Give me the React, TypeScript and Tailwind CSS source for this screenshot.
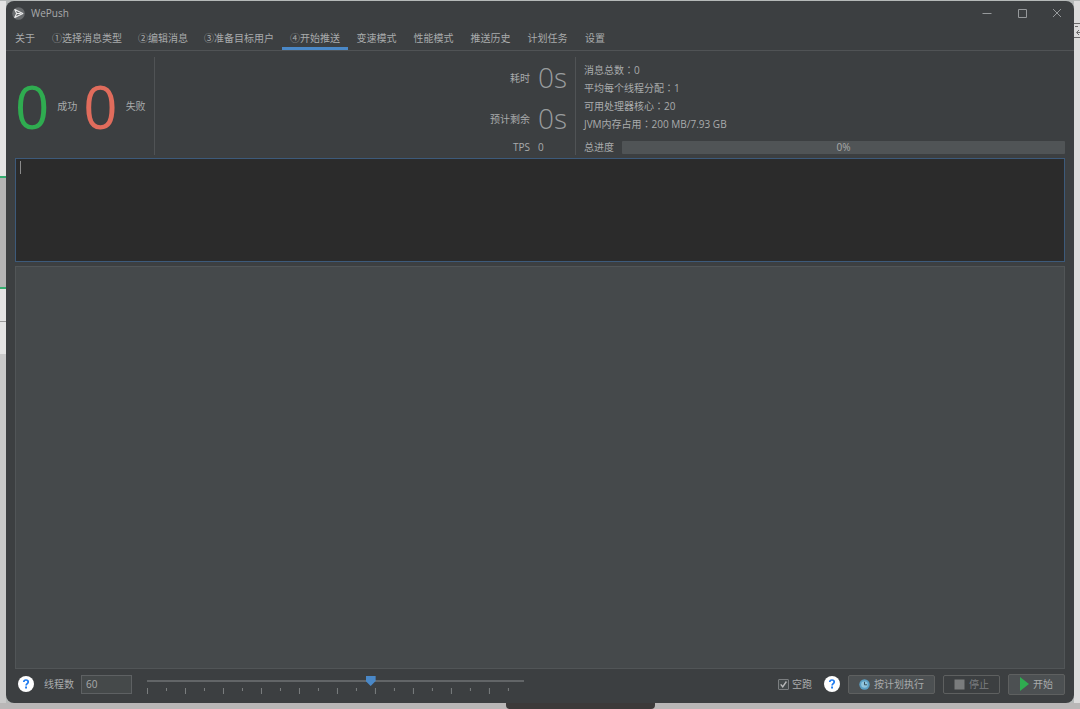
import { useState } from "react";
import type { ReactNode } from "react";

const tabs = [
  { label: "关于", width: "w-[38px]" },
  { label: "①选择消息类型", width: "w-[86px]" },
  { label: "②编辑消息", width: "w-[66px]" },
  { label: "③准备目标用户", width: "w-[86px]" },
  { label: "④开始推送", width: "w-[66px]" },
  { label: "变速模式", width: "w-[57px]" },
  { label: "性能模式", width: "w-[57px]" },
  { label: "推送历史", width: "w-[57px]" },
  { label: "计划任务", width: "w-[57px]" },
  { label: "设置", width: "w-[38px]" },
];

const stats = [
  { label: "消息总数", value: "0" },
  { label: "平均每个线程分配", value: "1" },
  { label: "可用处理器核心", value: "20" },
  { label: "JVM内存占用", value: "200 MB/7.93 GB" },
];

function Logo() {
  return (
    <svg width="13" height="13" viewBox="0 0 13 13" aria-hidden="true">
      <circle cx="6.5" cy="6.5" r="6.3" fill="#686b6d" />
      <path d="M2.8 2.5 10.8 6.5 2.8 10.5 4.6 6.5Z M4.8 6.5H8.6" fill="none" stroke="#eeeeee" strokeWidth="1.1" strokeLinejoin="round" />
    </svg>
  );
}

function TitleBar() {
  return (
    <header className="flex h-6 shrink-0 items-center pl-1.5 pr-3">
      <Logo />
      <h1 className="ml-1.5 text-[10px]">WePush</h1>
      <div className="ml-auto flex gap-[25px] pb-px text-[#96999b]">
        <button aria-label="最小化">
          <svg width="10" height="10" viewBox="0 0 10 10" stroke="currentColor"><path d="M.5 5.5h9" /></svg>
        </button>
        <button aria-label="最大化">
          <svg width="10" height="10" viewBox="0 0 10 10" fill="none" stroke="currentColor"><path d="M1.5 1.5h8v8h-8z" /></svg>
        </button>
        <button aria-label="关闭">
          <svg width="10" height="10" viewBox="0 0 10 10" stroke="currentColor"><path d="m1 1 8 8M9 1 1 9" /></svg>
        </button>
      </div>
    </header>
  );
}

function HelpButton() {
  return (
    <button aria-label="帮助" className="size-4 shrink-0 rounded-full bg-white">
      <svg width="16" height="16" viewBox="0 0 16 16" fill="none" aria-hidden="true">
        <path d="M5.8 6.1c0-1.4.9-2.1 2.2-2.1s2.2.8 2.2 2c0 1.6-2.1 1.7-2.1 3.5" stroke="#1f7bf0" strokeWidth="1.7" />
        <path d="M7.1 10.6h1.9v1.9H7.1z" fill="#1f7bf0" />
      </svg>
    </button>
  );
}

function BigCount({ value, label, color }: { value: string; label: string; color: string }) {
  return (
    <div className="flex items-center gap-2">
      <span className={`text-[60px] leading-[80px] ${color}`}>{value}</span>
      <span>{label}</span>
    </div>
  );
}

function Time({ label }: { label: string }) {
  return (
    <div className="contents">
      <span className="text-right">{label}</span>
      <span className="text-[28px] font-light leading-[41px] text-[#999c9e]">0s</span>
    </div>
  );
}

function ActionButton({ children, disabled = false, primary = false }: { children: ReactNode; disabled?: boolean; primary?: boolean }) {
  return (
    <button
      disabled={disabled}
      className={`flex items-center gap-1 rounded-[2px] border border-[#5e6060] bg-[#4c5052] disabled:bg-transparent disabled:text-[#7b7e80] ${primary ? "h-[21px] px-[11px]" : "h-[19px] px-[10px]"}`}
    >
      {children}
    </button>
  );
}

export default function App() {
  const [active, setActive] = useState(4);
  const [threads, setThreads] = useState(60);
  return (
    <div className="flex min-h-screen flex-col bg-[#b5b9b8] pt-px font-['Open_Sans','Noto_Sans_CJK_SC',sans-serif] text-[10px] leading-[18px] text-[#a9abac]">
      <div className="flex grow">
        <div className="flex w-1.5 shrink-0 flex-col bg-[#e4e4e4]">
          <div className="h-[175px]" />
          <div className="h-0.5 bg-[#35ae70]" />
          <div className="h-[109px] bg-[#b5b5b5]" />
          <div className="h-0.5 bg-[#35ae70]" />
          <div className="h-8" />
          <div className="h-px bg-[#9a9a9a]" />
          <div className="h-8" />
          <div className="grow bg-[#c9c9c9]" />
        </div>

        <div className="flex min-w-0 grow flex-col rounded-lg bg-[#3c3f41]">
          <TitleBar />
          <nav className="flex h-[26px] shrink-0 border-b border-[#505355]">
            {tabs.map((tab, i) => (
              <button
                key={tab.label}
                onClick={() => setActive(i)}
                aria-current={active === i ? "page" : undefined}
                className={`shrink-0 whitespace-nowrap border-b-[3px] pt-[3px] ${tab.width} ${active === i ? "border-[#4a88c7]" : "border-transparent"}`}
              >
                {tab.label}
              </button>
            ))}
          </nav>

          <main className="flex grow flex-col px-[9px]">
            <section className="flex pb-[3px] pt-1.5">
              <div className="flex items-center gap-1.5 border-r border-[#505355] pr-2">
                <BigCount value="0" label="成功" color="text-[#2fac50]" />
                <BigCount value="0" label="失败" color="text-[#e06c5c]" />
              </div>
              <div className="flex flex-6 justify-end pr-2">
                <div className="grid grid-cols-[auto_auto] items-center gap-x-2">
                  <Time label="耗时" />
                  <Time label="预计剩余" />
                  <span className="text-right leading-4">TPS</span>
                  <span className="leading-4">0</span>
                </div>
              </div>
              <div className="flex flex-7 flex-col border-l border-[#505355] pl-2 pt-1">
                {stats.map((stat) => (
                  <p key={stat.label}>
                    {stat.label}
                    <span className="font-['Noto_Sans_CJK_JP',sans-serif]">：</span>
                    {stat.value}
                  </p>
                ))}
                <div className="mt-auto flex items-center gap-2 leading-4">
                  <span>总进度</span>
                  <div role="progressbar" aria-label="总进度" aria-valuenow={0} className="h-[13px] grow rounded-[1px] bg-[#505456] text-center leading-[13px]">
                    0%
                  </div>
                </div>
              </div>
            </section>

            <div className="relative flex h-[104px] shrink-0">
              <textarea
                aria-label="日志"
                className="grow resize-none border border-[#3d5a7a] bg-[#2b2b2b] px-1 py-px caret-transparent outline-none"
              />
              <span className="absolute left-[5px] top-[3px] h-[13px] w-px bg-[#8a8a8a]" />
            </div>
            <div className="mt-1 grow border border-[#515557] bg-[#45494b]" />

            <footer className="flex h-[34px] shrink-0 items-center pb-1 pl-[3px]">
              <HelpButton />
              <label htmlFor="threads" className="ml-[10px]">线程数</label>
              <input
                id="threads"
                value={threads}
                onChange={(e) => setThreads(Number(e.target.value))}
                className="ml-[7px] h-[19px] w-[51px] border border-[#5e6163] bg-[#45494a] px-1 outline-none"
              />
              <div className="ml-[15px] flex w-[36%] flex-col pt-0.5">
                <input
                  type="range"
                  aria-label="线程数"
                  min={1}
                  max={100}
                  value={threads}
                  onChange={(e) => setThreads(Number(e.target.value))}
                  className="h-[10px] w-full appearance-none bg-[linear-gradient(#626567,#626567)] bg-[length:100%_2px] bg-[position:0_4px] bg-no-repeat [&::-webkit-slider-thumb]:h-[10px] [&::-webkit-slider-thumb]:w-[10px] [&::-webkit-slider-thumb]:appearance-none [&::-webkit-slider-thumb]:bg-[#4a88c7] [&::-webkit-slider-thumb]:[clip-path:polygon(0_0,100%_0,100%_50%,50%_100%,0_50%)]"
                />
                <svg className="mt-0.5 h-[6px] w-full" viewBox="0 0 378 6" preserveAspectRatio="none" stroke="#7b7e80">
                  {Array.from({ length: 20 }, (_, i) => (
                    <path key={i} d={`M${0.5 + i * 19.05} 0v${i % 2 ? 3 : 6}`} />
                  ))}
                </svg>
              </div>

              <div className="ml-auto flex shrink-0 items-center gap-2">
                <label className="flex items-center gap-[3px] pr-1">
                  <span className="relative flex size-[11px]">
                    <input type="checkbox" defaultChecked className="peer size-[11px] appearance-none rounded-[1px] border border-[#7b7e80] bg-[#43494a]" />
                    <svg className="pointer-events-none absolute inset-0 hidden peer-checked:block" width="11" height="11" viewBox="0 0 11 11" fill="none" stroke="#b8b9ba" strokeWidth="1.4">
                      <path d="m2.7 5.4 2 2.4 3.7-5.3" />
                    </svg>
                  </span>
                  空跑
                </label>
                <HelpButton />
                <ActionButton>
                  <svg width="11" height="11" viewBox="0 0 11 11" fill="none" aria-hidden="true">
                    <circle cx="5.5" cy="5.5" r="5.2" fill="#5b9fc4" />
                    <circle cx="5.5" cy="5.5" r="3.3" fill="#8fc4dd" />
                    <path d="M5.5 2.8v3h2.6" stroke="#37505e" />
                  </svg>
                  按计划执行
                </ActionButton>
                <ActionButton disabled>
                  <svg width="11" height="11" viewBox="0 0 11 11" aria-hidden="true"><path d="M.5.5h10v10H.5z" fill="#7a7c7d" /></svg>
                  停止
                </ActionButton>
                <ActionButton primary>
                  <svg width="9" height="14" viewBox="0 0 9 14" aria-hidden="true"><path d="M0 0 9 7 0 14z" fill="#2fac50" /></svg>
                  开始
                </ActionButton>
              </div>
            </footer>
          </main>
        </div>

        <div className="w-1.5 shrink-0 bg-[#dcdcdc] pt-[21px]">
          <svg width="6" height="16" viewBox="0 0 6 16" fill="none" stroke="#6a6a6a" aria-hidden="true">
            <path d="M0 1.5h6M1 4.5h3M0 15.5h6M6 10.5H3M5 8l-2.5 2.5L5 13" />
          </svg>
        </div>
      </div>
      <div className="flex h-[6px] shrink-0 bg-[#b9b7b7]">
        <div className="ml-[506px] w-[149px] rounded-b-sm bg-[#3c3a3a]" />
      </div>
    </div>
  );
}
